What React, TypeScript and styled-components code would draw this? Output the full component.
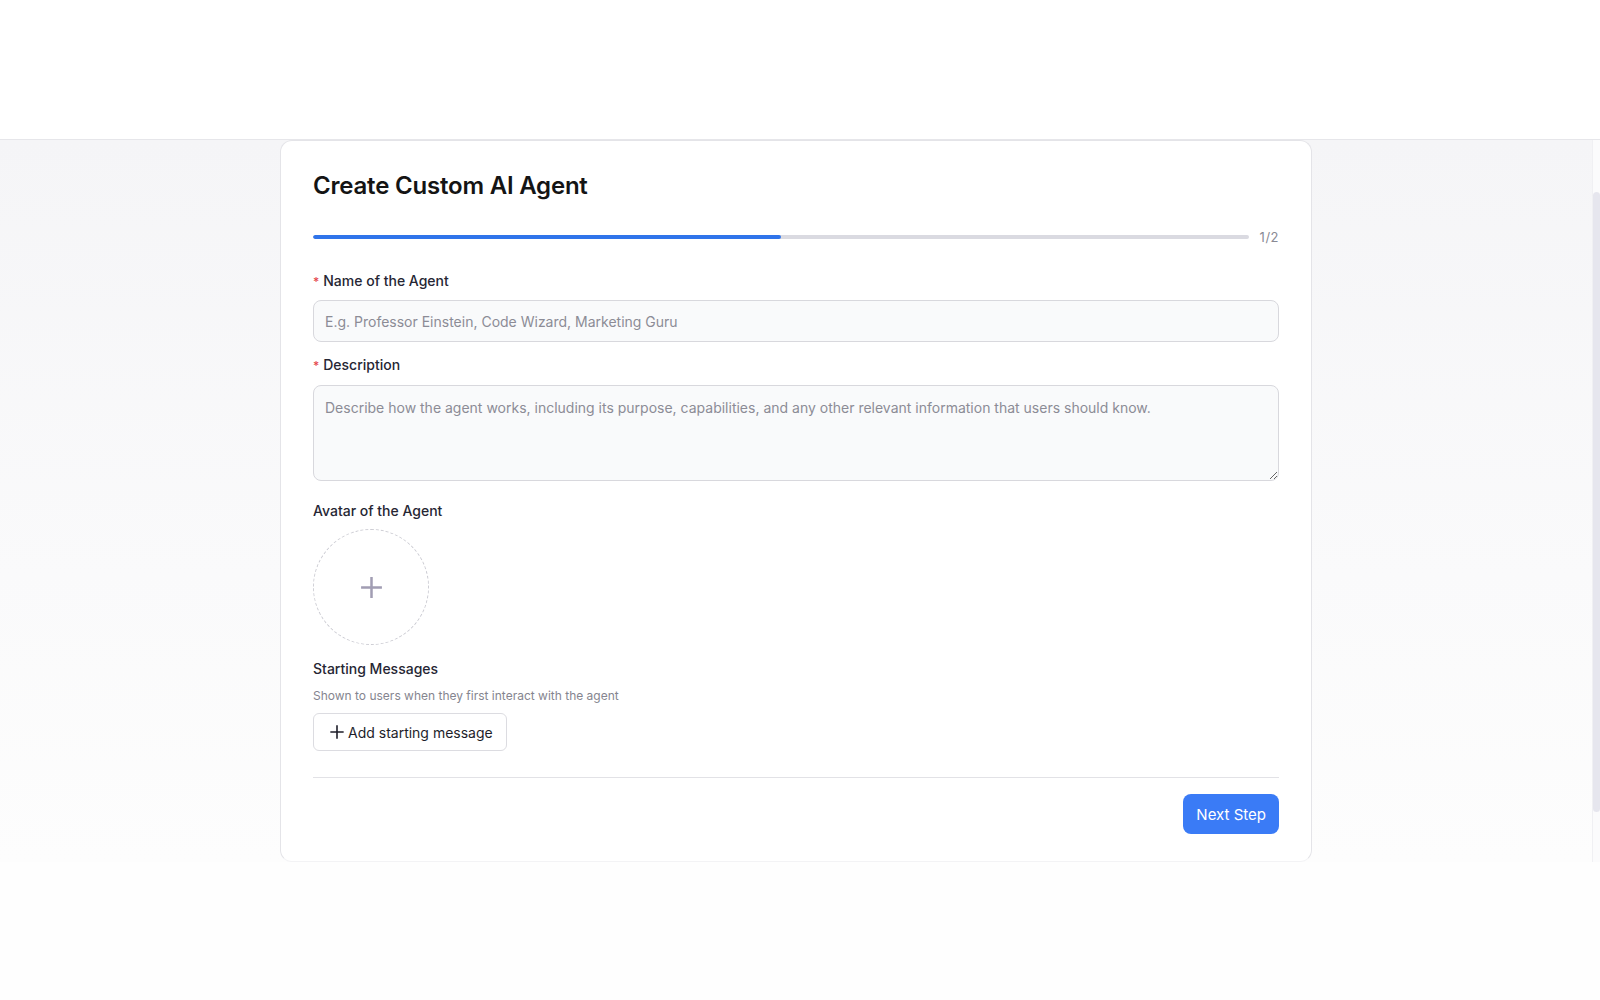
import styled, { createGlobalStyle } from "styled-components";

const GlobalStyle = createGlobalStyle`
  html, body {
    margin: 0;
    padding: 0;
    height: 1000px;
    overflow: hidden;
    font-family: Inter, "Noto Sans", "Liberation Sans", sans-serif;
    background: #fefefe;
  }
  * { box-sizing: border-box; }
`;

const Page = styled.div`
  height: 1000px;
  display: flex;
  flex-direction: column;
`;

const Header = styled.header`
  height: 140px;
  background: #ffffff;
  border-bottom: 1px solid #e6e6ea;
  flex-shrink: 0;
`;

const Body = styled.div`
  height: 722px;
  display: flex;
  background: linear-gradient(180deg, #f5f5f7 0%, #fafafb 60%, #fdfdfd 100%);
  flex-shrink: 0;
`;

const Scroller = styled.main`
  flex: 1;
  display: flex;
  justify-content: center;
  align-items: flex-start;
  overflow: hidden;
`;

const ScrollRail = styled.div`
  width: 8px;
  display: flex;
  flex-direction: column;
  padding: 52px 0 50px;
  border-left: 1px solid #f0f0f3;
  background: #fbfbfc;
`;

const Thumb = styled.div`
  flex: 1;
  border-radius: 4px;
  background: #e6e6ee;
`;

const Footer = styled.div`
  flex: 1;
  background: #fefefe;
`;

const Card = styled.section`
  width: 1032px;
  height: 722px;
  background: #ffffff;
  border: 1px solid #e4e4e8;
  border-bottom-color: #f3f3f5;
  border-radius: 12px;
  padding: 29px 32px 27px;
  display: flex;
  flex-direction: column;
`;

const Title = styled.h1`
  margin: 0;
  font-size: 24px;
  line-height: 32px;
  font-weight: 600;
  color: #141414;
  letter-spacing: -0.2px;
`;

const ProgressRow = styled.div`
  margin-top: 25px;
  height: 20px;
  display: flex;
  align-items: center;
  gap: 11px;
`;

const Track = styled.div`
  flex: 1;
  height: 4px;
  border-radius: 2px;
  background: #dadae1;
  overflow: hidden;
`;

const Fill = styled.div`
  height: 100%;
  background: #2f74ea;
  border-radius: 2px;
`;

const StepCount = styled.span`
  font-size: 13px;
  color: #8a8a94;
  letter-spacing: 0.5px;
`;

const Label = styled.label<{ $gap: number }>`
  display: block;
  margin-top: ${(p) => p.$gap}px;
  font-size: 14px;
  line-height: 20px;
  font-weight: 500;
  color: #262633;
`;

const Required = styled.span`
  color: #e5484d;
  margin-right: 4px;
  font-size: 12px;
`;

const TextInput = styled.input`
  display: block;
  margin-top: 8px;
  width: 100%;
  height: 42px;
  padding: 0 11px;
  border: 1px solid #d8d8dd;
  border-radius: 8px;
  background: #f9fafb;
  font-family: inherit;
  font-size: 14px;
  color: #1e1e2a;
  outline: none;
  &::placeholder { color: #8c8c96; }
`;

const TextArea = styled.textarea`
  display: block;
  margin-top: 9px;
  width: 100%;
  height: 96px;
  padding: 11px 11px;
  border: 1px solid #d8d8dd;
  border-radius: 8px;
  background: #f9fafb;
  font-family: inherit;
  font-size: 14px;
  line-height: 22px;
  color: #1e1e2a;
  resize: vertical;
  outline: none;
  &::placeholder { color: #8c8c96; }
`;

const AvatarDrop = styled.button`
  margin-top: 8px;
  width: 116px;
  height: 116px;
  border-radius: 50%;
  border: 1.5px dashed #cdcdd4;
  background: #ffffff;
  display: flex;
  align-items: center;
  justify-content: center;
  padding: 0;
  cursor: pointer;
`;

const Hint = styled.p`
  margin: 8px 0 0;
  font-size: 12px;
  line-height: 18px;
  color: #85858f;
`;

const AddButton = styled.button`
  margin-top: 8px;
  align-self: flex-start;
  height: 38px;
  padding: 0 13px 0 15px;
  display: flex;
  align-items: center;
  gap: 3px;
  border: 1px solid #dcdce1;
  border-radius: 6px;
  background: #ffffff;
  font-family: inherit;
  font-size: 14px;
  color: #1e1e2a;
  cursor: pointer;
`;

const Divider = styled.hr`
  margin: 26px 0 0;
  border: 0;
  border-top: 1px solid #e2e2e6;
`;

const Actions = styled.div`
  margin-top: 16px;
  display: flex;
  justify-content: flex-end;
`;

const PrimaryButton = styled.button`
  height: 40px;
  padding: 0 13px;
  border: 0;
  border-radius: 8px;
  background: #3a7bf6;
  color: #ffffff;
  font-family: inherit;
  font-size: 15px;
  font-weight: 400;
  cursor: pointer;
`;

function PlusIcon({ size, color, width }: { size: number; color: string; width: number }) {
  return (
    <svg width={size} height={size} viewBox="0 0 24 24" fill="none">
      <path d="M12 2v20M2 12h20" stroke={color} strokeWidth={width} strokeLinecap="butt" />
    </svg>
  );
}

export default function App() {
  return (
    <>
      <GlobalStyle />
      <Page>
        <Header />
        <Body>
          <Scroller>
            <Card>
              <Title>Create Custom AI Agent</Title>
              <ProgressRow>
                <Track>
                  <Fill style={{ width: "50%" }} />
                </Track>
                <StepCount>1/2</StepCount>
              </ProgressRow>

              <Label $gap={24}>
                <Required>*</Required>Name of the Agent
              </Label>
              <TextInput placeholder="E.g. Professor Einstein, Code Wizard, Marketing Guru" />

              <Label $gap={13}>
                <Required>*</Required>Description
              </Label>
              <TextArea placeholder="Describe how the agent works, including its purpose, capabilities, and any other relevant information that users should know." />

              <Label $gap={20}>Avatar of the Agent</Label>
              <AvatarDrop type="button">
                <PlusIcon size={25} color="#a19db3" width={2.4} />
              </AvatarDrop>

              <Label $gap={14}>Starting Messages</Label>
              <Hint>Shown to users when they first interact with the agent</Hint>
              <AddButton type="button">
                <PlusIcon size={16} color="#1e1e2a" width={2.4} />
                Add starting message
              </AddButton>

              <Divider />
              <Actions>
                <PrimaryButton type="button">Next Step</PrimaryButton>
              </Actions>
            </Card>
          </Scroller>
          <ScrollRail>
            <Thumb />
          </ScrollRail>
        </Body>
        <Footer />
      </Page>
    </>
  );
}
